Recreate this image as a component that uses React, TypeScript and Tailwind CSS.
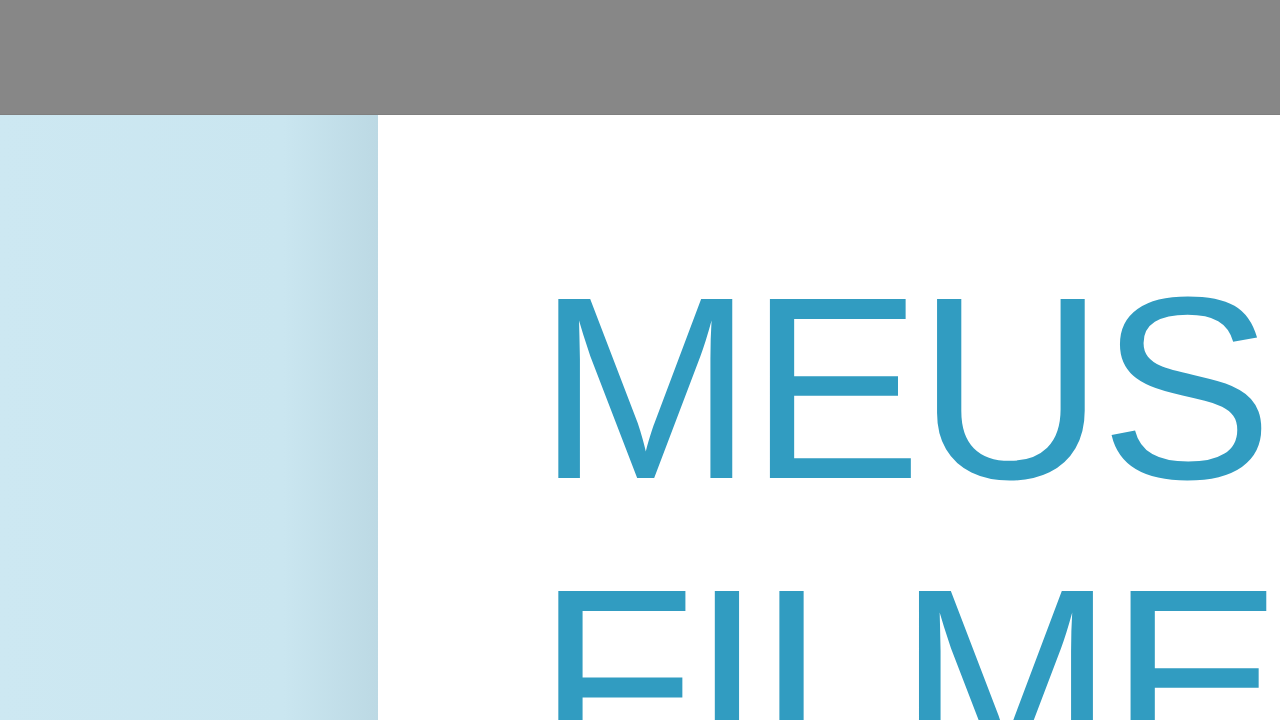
export default function App() {
  return (
    <div className="flex h-screen w-screen flex-col overflow-hidden bg-white font-['Liberation_Sans',Arial,sans-serif]">
      <header className="h-[115px] shrink-0 border-b border-[#7f7f7f] bg-[#878787]" />
      <div className="flex flex-1 overflow-hidden">
        <aside className="w-[378px] shrink-0 bg-gradient-to-r from-[#cde8f2] via-[#cae6f0] via-75% to-[#bcd9e4]" />
        <main className="flex-1 pl-[159px] pt-[127px]">
          <h1 className="text-[260px] font-normal leading-[292px] tracking-[-5px] text-[#319cc1]">
            MEUS FILMES
          </h1>
        </main>
      </div>
    </div>
  );
}
